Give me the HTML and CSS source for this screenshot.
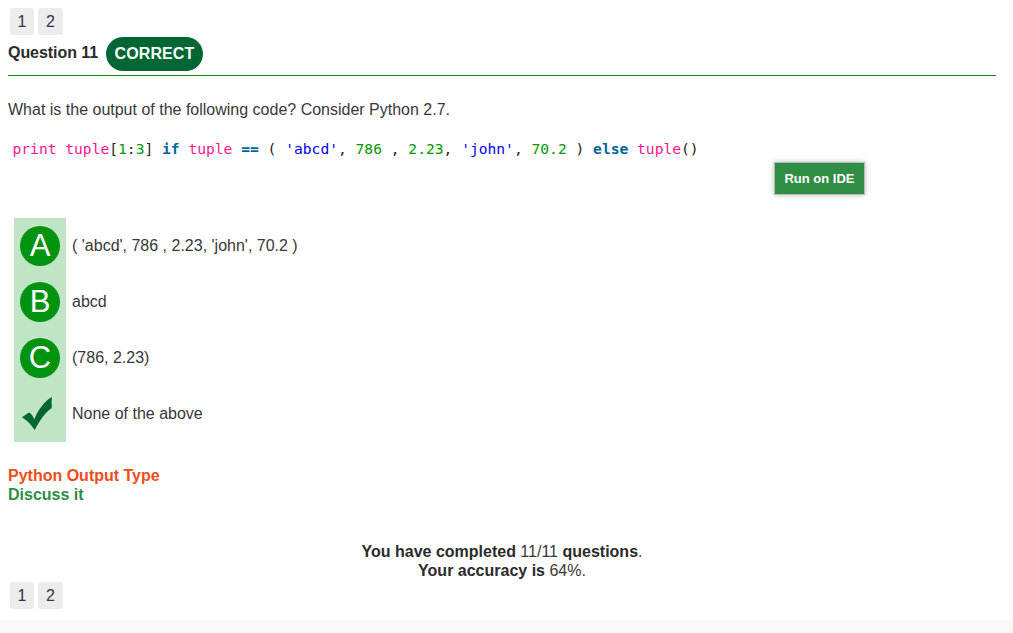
FILE: index.html
```html
<!DOCTYPE html>
<html lang="en">
<head>
<meta charset="utf-8">
<title>Python Output Type</title>
<link rel="stylesheet" href="styles.css">
</head>
<body>
<main class="quiz">
  <nav class="pages"><a class="page">1</a><a class="page two">2</a></nav>
  <header class="question-head"><span class="question-title">Question 11</span><span class="badge">CORRECT</span></header>
  <p class="prompt"><span>What is the output of the following code? Consider Python 2.7.</span></p>
  <pre class="code"><span class="fn">print</span> <span class="fn">tuple</span>[<span class="num">1</span>:<span class="num">3</span>] <span class="kw">if</span> <span class="fn">tuple</span> <span class="kw">==</span> ( <span class="str">'abcd'</span>, <span class="num">786</span> , <span class="num">2.23</span>, <span class="str">'john'</span>, <span class="num">70.2</span> ) <span class="kw">else</span> <span class="fn">tuple</span>()</pre>
  <div class="run-row"><button class="run">Run on IDE</button></div>
  <ul class="answers">
    <li class="answer"><span class="mark"><span class="letter">A</span></span><span class="text">( 'abcd', 786 , 2.23, 'john', 70.2 )</span></li>
    <li class="answer"><span class="mark"><span class="letter">B</span></span><span class="text">abcd</span></li>
    <li class="answer"><span class="mark"><span class="letter">C</span></span><span class="text">(786, 2.23)</span></li>
    <li class="answer"><span class="mark"><svg class="check" viewBox="0 0 40 40"><path d="M2 23.2 L9 18.6 C11.5 20 13 22.5 14.3 25.5 C18 16 24 7.5 32 3 Q31.2 8 31.8 14 C25 18.5 19.5 27 14.7 36 C11.5 31 7.5 26.5 2 23.2Z"/></svg></span><span class="text">None of the above</span></li>
  </ul>
  <div class="links"><a class="topic">Python Output Type</a><a class="discuss">Discuss it</a></div>
  <div class="summary"><div><b>You have completed</b> 11/11 <b>questions</b>.</div><div><b>Your accuracy is</b> 64%.</div></div>
  <nav class="pages bottom"><a class="page">1</a><a class="page two">2</a></nav>
</main>
<footer class="footer"></footer>
</body>
</html>
```
FILE: styles.css
```css
* { box-sizing: border-box; }
body {
  margin: 0;
  height: 633px;
  display: flex;
  flex-direction: column;
  overflow: hidden;
  background: #fff;
  color: #383838;
  font: 16px/19px "Liberation Sans", Arial, sans-serif;
}
.quiz { height: 620px; padding: 8px 17px 0 8px; }
.pages { display: flex; gap: 4px; padding-left: 2px; height: 27px; }
.page {
  width: 24px;
  height: 27px;
  border-radius: 3px;
  background: #ececec;
  color: #32373c;
  line-height: 27px;
  text-align: center;
}
.two { width: 25px; }
.question-head {
  display: flex;
  height: 41px;
  padding-top: 2px;
  border-bottom: 1px solid #0f8a15;
}
.question-title { width: 98px; padding-top: 6px; color: #2b2b2b; font-weight: bold; letter-spacing: -0.05px; white-space: nowrap; }
.badge {
  width: 97px;
  height: 34px;
  border-radius: 17px;
  background: #006633;
  color: #fff;
  font-weight: bold;
  line-height: 33px;
  text-align: center;
  letter-spacing: 0.1px;
}
.prompt { margin: 24px 0 0; }
.code {
  margin: 19px 0 0;
  padding-left: 4.5px;
  height: 22px;
  color: #222;
  font: 14.62px/22px "DejaVu Sans Mono", monospace;
}
.fn { color: #ff1493; }
.num { color: #009900; }
.str { color: #0000ff; }
.kw { color: #006699; font-weight: bold; }
.run-row { padding: 2px 0 0 766px; }
.run {
  display: block;
  width: 91px;
  height: 33px;
  padding: 0;
  border: 1px solid #bbb;
  background: #2f8d46;
  box-shadow: 0 0 5px #bbb;
  color: #fff;
  font: bold 13px/30px "Liberation Sans", Arial, sans-serif;
}
.answers { margin: 23px 0 0 6px; padding: 0; list-style: none; }
.answer { display: flex; height: 56px; }
.mark { width: 52px; padding: 8px 6px; background: #c0e4c5; }
.letter {
  display: block;
  width: 40px;
  height: 40px;
  border-radius: 50%;
  background: #00930f;
  color: #fff;
  font-size: 31px;
  line-height: 40px;
  text-align: center;
}
.check { display: block; width: 40px; height: 40px; fill: #006633; }
.text { padding: 18px 0 0 6px; }
.links { display: flex; flex-direction: column; margin-top: 24px; font-weight: bold; }
.topic { color: #ec4e20; }
.discuss { color: #2f8d46; }
.summary { margin-top: 38px; text-align: center; }
.summary b { color: #2b2b2b; }
.bottom { margin-top: 2px; }
.footer { height: 13px; background: #f9f9f9; }
```
